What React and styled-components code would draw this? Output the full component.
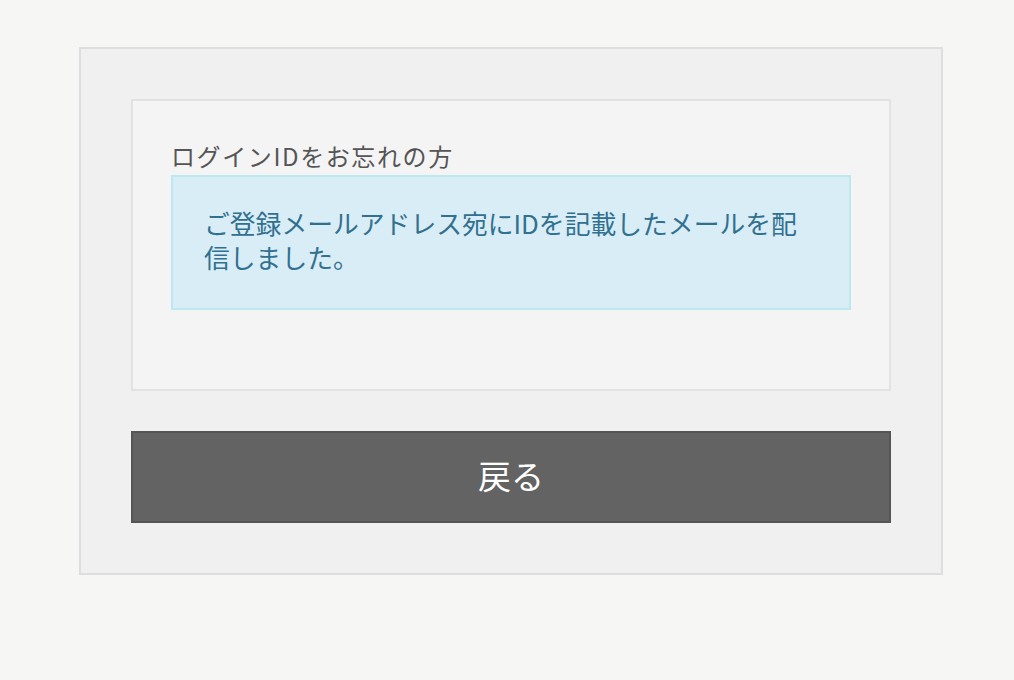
import React from 'react'
import styled, { createGlobalStyle } from 'styled-components'

const GlobalStyle = createGlobalStyle`
  html, body {
    margin: 0;
    padding: 0;
    background-color: #f6f7f5;
  }
  body {
    font-family: "Noto Sans CJK JP", "Noto Sans", sans-serif;
  }
`

const App = () => {
  return (
    <>
      <GlobalStyle />
      <Page>
        <Panel>
          <Card>
            <Label>ログインIDをお忘れの方</Label>
            <Alert>
              ご登録メールアドレス宛にIDを記載したメールを配信しました。
            </Alert>
          </Card>
          <BackButton type="button">戻る</BackButton>
        </Panel>
      </Page>
    </>
  )
}

export default App

const Page = styled.div`
  width: 100%;
  min-height: 680px;
  box-sizing: border-box;
  padding: 47px 0 0 79px;
`

const Panel = styled.div`
  width: 864px;
  box-sizing: border-box;
  padding: 50px;
  background-color: #f0f0f0;
  border: 2px solid #dedede;
  display: flex;
  flex-direction: column;
  gap: 40px;
`

const Card = styled.div`
  background-color: #f4f4f4;
  border: 2px solid #e2e2e2;
  padding: 40px 38px 79px;
  display: flex;
  flex-direction: column;
`

const Label = styled.div`
  font-size: 24px;
  line-height: 30px;
  padding-bottom: 4px;
  color: #555555;
  letter-spacing: 1.6px;
`

const Alert = styled.div`
  background-color: #d9edf7;
  border: 2px solid #bce8f1;
  color: #31708f;
  font-size: 25.8px;
  line-height: 34px;
  padding: 29px 31px 34px 31px;
`

const BackButton = styled.button`
  height: 92px;
  width: 100%;
  box-sizing: border-box;
  background-color: #636363;
  border: 2px solid #555555;
  color: #ffffff;
  font-family: "Noto Sans CJK JP", "Noto Sans", sans-serif;
  font-size: 33px;
  cursor: pointer;
  display: flex;
  align-items: center;
  justify-content: center;
  padding: 0 0 5px;
`
